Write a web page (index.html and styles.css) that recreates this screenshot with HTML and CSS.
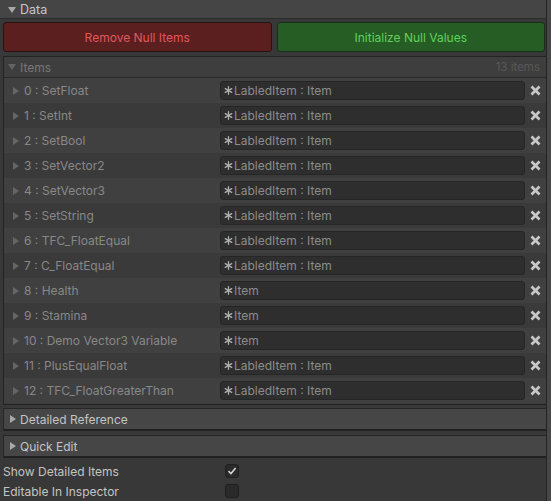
FILE: index.html
```html
<!DOCTYPE html>
<html>
<head>
<meta charset="utf-8">
<link rel="stylesheet" href="styles.css">
</head>
<body>
<div class="page">
  <div class="main">
    <div class="section-head">
      <span class="tri down light"></span><span class="head-label">Data</span>
    </div>
    <div class="buttons">
      <div class="btn btn-red">Remove Null Items</div>
      <div class="btn btn-green">Initialize Null Values</div>
    </div>
    <div class="items-box">
      <div class="items-head">
        <span class="tri down dim"></span><span class="items-title">Items</span>
        <span class="count">13 items</span>
      </div>
      <div class="rows" id="rows"></div>
    </div>
    <div class="foldout"><span class="tri right light"></span><span>Detailed Reference</span></div>
    <div class="foldout"><span class="tri right light"></span><span>Quick Edit</span></div>
    <div class="prop">
      <span class="prop-label">Show Detailed Items</span>
      <span class="check on"><svg width="10" height="10" viewBox="0 0 10 10"><path d="M1.5 5.2 L4 7.6 L8.6 2" fill="none" stroke="#d2d2d2" stroke-width="1.6"/></svg></span>
    </div>
    <div class="prop">
      <span class="prop-label">Editable In Inspector</span>
      <span class="check"></span>
    </div>
  </div>
  <div class="sep"></div>
  <div class="strip"></div>
</div>
<script>
var items=[["0 : SetFloat","LabledItem : Item"],["1 : SetInt","LabledItem : Item"],["2 : SetBool","LabledItem : Item"],["3 : SetVector2","LabledItem : Item"],["4 : SetVector3","LabledItem : Item"],["5 : SetString","LabledItem : Item"],["6 : TFC_FloatEqual","LabledItem : Item"],["7 : C_FloatEqual","LabledItem : Item"],["8 : Health","Item"],["9 : Stamina","Item"],["10 : Demo Vector3 Variable","Item"],["11 : PlusEqualFloat","LabledItem : Item"],["12 : TFC_FloatGreaterThan","LabledItem : Item"]];
var star='<svg class="star" width="9" height="9" viewBox="0 0 10 10"><g stroke="#b0b0b0" stroke-width="1.4" stroke-linecap="round"><line x1="5" y1="0.8" x2="5" y2="9.2"/><line x1="1.4" y1="2.9" x2="8.6" y2="7.1"/><line x1="1.4" y1="7.1" x2="8.6" y2="2.9"/></g></svg>';
var x='<svg width="11" height="11" viewBox="0 0 11 11"><g stroke="#c8c8c8" stroke-width="2.6" stroke-linecap="butt"><line x1="1.5" y1="1.5" x2="9.5" y2="9.5"/><line x1="9.5" y1="1.5" x2="1.5" y2="9.5"/></g></svg>';
var h='';
items.forEach(function(it,i){
  h+='<div class="row '+(i%2?'odd':'even')+'"><span class="tri right dim"></span><span class="row-label">'+it[0]+'</span><div class="field">'+star+'<span>'+it[1]+'</span></div><span class="xbtn">'+x+'</span></div>';
});
document.getElementById('rows').innerHTML=h;
</script>
</body>
</html>
```

FILE: styles.css
```css
html, body {
  margin: 0;
  padding: 0;
  background: #383838;
}
body {
  font-family: Inter, "Noto Sans", sans-serif;
  font-size: 12px;
  color: #c4c4c4;
  width: 551px;
  height: 501px;
  overflow: hidden;
}
.page {
  display: flex;
  height: 501px;
}
.main {
  width: 546px;
  display: flex;
  flex-direction: column;
}
.sep {
  width: 1px;
  background: #232323;
}
.strip {
  flex: 1;
  background: #474747;
}
.tri {
  display: inline-block;
  width: 0;
  height: 0;
}
.tri.down {
  border-left: 4px solid transparent;
  border-right: 4px solid transparent;
  border-top: 6px solid #a8a8a8;
}
.tri.right {
  border-top: 4.5px solid transparent;
  border-bottom: 4.5px solid transparent;
  border-left: 6px solid #a8a8a8;
}
.tri.dim.down { border-top-color: #636363; }
.tri.dim.right { border-left-color: #666666; }
.section-head {
  height: 18px;
  background: #454545;
  border-bottom: 1px solid #2b2b2b;
  display: flex;
  align-items: center;
  padding-left: 8px;
  gap: 4px;
  font-size: 12.5px;
}
.section-head .tri { margin-top: 1px; }
.head-label { color: #c8c8c8; }
.buttons {
  display: flex;
  gap: 5px;
  padding: 3px 1px 0 3px;
  height: 30px;
}
.btn {
  flex: 1;
  border-radius: 3px;
  display: flex;
  align-items: center;
  justify-content: center;
  font-size: 12px;
}
.btn-red {
  background: #5b1f20;
  border: 1px solid #2a1212;
  color: #e0585d;
}
.btn-green {
  background: #255d24;
  border: 1px solid #16301a;
  color: #61d15c;
}
.items-box {
  margin: 4px 0 0 3px;
  border: 1px solid #232323;
  border-right: none;
  background: #3b3b3b;
}
.items-head {
  height: 20px;
  display: flex;
  align-items: center;
  padding-left: 4px;
  gap: 4px;
  background: #3e3e3e;
  border-bottom: 1px solid #2a2a2a;
}
.items-title { color: #777; }
.count {
  margin-left: auto;
  margin-right: 6px;
  color: #585858;
  font-size: 11.5px;
}
.rows {
  display: flex;
  flex-direction: column;
  padding-bottom: 1px;
}
.row {
  height: 25px;
  display: flex;
  align-items: center;
  padding-left: 9px;
}
.row.even { background: #404040; }
.row.odd { background: #3a3a3a; }
.row .tri { margin-right: 5px; }
.row-label {
  color: #888888;
  width: 196px;
  white-space: nowrap;
}
.field {
  width: 305px;
  height: 19px;
  background: #2e2e2e;
  border: 1px solid #262626;
  border-radius: 3px;
  display: flex;
  align-items: center;
  gap: 1px;
  padding-left: 3px;
  box-sizing: border-box;
  color: #8c8c8c;
  white-space: nowrap;
}
.star { flex: none; }
.xbtn {
  margin-left: 5px;
  width: 11px;
  height: 11px;
  display: flex;
}
.foldout {
  margin: 3px 0 0 3px;
  background: #464646;
  border: 1px solid #262626;
  border-right: none;
  border-bottom: 2px solid #222;
  box-sizing: border-box;
  height: 23px;
  display: flex;
  align-items: center;
  padding-left: 6px;
  gap: 4px;
  color: #c4c4c4;
}
.foldout + .foldout { margin-top: 4px; }
.prop {
  height: 20px;
  display: flex;
  align-items: center;
  padding-left: 3px;
}
.foldout + .foldout + .prop { margin-top: 3px; }
.prop-label {
  width: 222px;
  color: #c4c4c4;
}
.check {
  width: 14px;
  height: 14px;
  box-sizing: border-box;
  background: #2a2a2a;
  border: 1px solid #1f1f1f;
  border-radius: 3px;
  display: flex;
  align-items: center;
  justify-content: center;
}
```
